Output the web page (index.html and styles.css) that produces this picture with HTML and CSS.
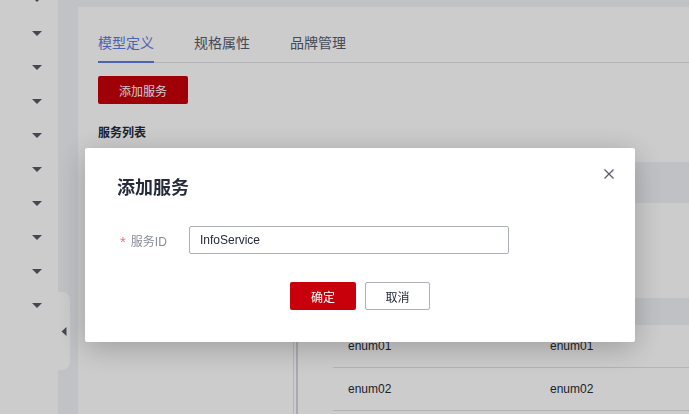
FILE: index.html
```html
<!DOCTYPE html>
<html lang="zh-CN">
<head>
    <meta charset="UTF-8">
    <meta name="viewport" content="width=device-width, initial-scale=1.0">
    <title>模型定义</title>
    <link rel="stylesheet" href="styles.css">
</head>
<body>
    <div class="sidebar">
        <ul class="menu">
            <li><svg class="caret" viewBox="0 0 10 5"><polygon points="0,0 10,0 5,5"/></svg></li>
            <li><svg class="caret" viewBox="0 0 10 5"><polygon points="0,0 10,0 5,5"/></svg></li>
            <li><svg class="caret" viewBox="0 0 10 5"><polygon points="0,0 10,0 5,5"/></svg></li>
            <li><svg class="caret" viewBox="0 0 10 5"><polygon points="0,0 10,0 5,5"/></svg></li>
            <li><svg class="caret" viewBox="0 0 10 5"><polygon points="0,0 10,0 5,5"/></svg></li>
            <li><svg class="caret" viewBox="0 0 10 5"><polygon points="0,0 10,0 5,5"/></svg></li>
            <li><svg class="caret" viewBox="0 0 10 5"><polygon points="0,0 10,0 5,5"/></svg></li>
            <li><svg class="caret" viewBox="0 0 10 5"><polygon points="0,0 10,0 5,5"/></svg></li>
            <li><svg class="caret" viewBox="0 0 10 5"><polygon points="0,0 10,0 5,5"/></svg></li>
            <li><svg class="caret" viewBox="0 0 10 5"><polygon points="0,0 10,0 5,5"/></svg></li>
        </ul>
        <div class="collapse-handle">
            <svg viewBox="0 0 5 9"><polygon points="5,0 5,9 0,4.5"/></svg>
        </div>
    </div>

    <div class="main">
        <div class="card">
            <div class="tabs">
                <div class="tab active">模型定义</div>
                <div class="tab">规格属性</div>
                <div class="tab">品牌管理</div>
            </div>
            <button class="btn-add">添加服务</button>
            <div class="section-title">服务列表</div>
            <div class="workspace">
                <div class="service-list"></div>
                <div class="splitter"></div>
                <div class="detail">
                    <div class="detail-header"></div>
                    <table class="enum-table">
                        <thead>
                            <tr><th class="col-1"></th><th></th></tr>
                        </thead>
                        <tbody>
                            <tr><td class="col-1">enum01</td><td>enum01</td></tr>
                            <tr><td class="col-1">enum02</td><td>enum02</td></tr>
                        </tbody>
                    </table>
                </div>
            </div>
        </div>
    </div>

    <div class="mask">
        <div class="modal">
            <button class="modal-close">
                <svg viewBox="0 0 10 10"><path d="M0.5 0.5 L9.5 9.5 M9.5 0.5 L0.5 9.5"/></svg>
            </button>
            <div class="modal-title">添加服务</div>
            <div class="form-row">
                <label class="form-label"><span class="required">*</span>服务ID</label>
                <input class="form-input" type="text" value="InfoService">
            </div>
            <div class="modal-footer">
                <button class="btn btn-ok">确定</button>
                <button class="btn btn-cancel">取消</button>
            </div>
        </div>
    </div>
</body>
</html>
```

FILE: styles.css
```css
body {
    margin: 0;
    padding: 0;
    display: flex;
    height: 100vh;
    overflow: hidden;
    font-family: "Liberation Sans", "Noto Sans CJK SC", sans-serif;
    font-size: 12px;
    color: #252b3a;
    background: #f1f3f8;
}

/* left nav (collapsed) */
.sidebar {
    width: 58px;
    flex: none;
    background: #fff;
    position: relative;
}
.menu {
    list-style: none;
    margin: -18px 0 0 0;
    padding: 0;
}
.menu li {
    height: 34px;
    display: flex;
    align-items: center;
    padding-left: 32px;
}
.caret {
    width: 10px;
    height: 5px;
    fill: #555a66;
}
.collapse-handle {
    position: absolute;
    left: 58px;
    top: 292px;
    width: 12px;
    height: 78px;
    background: #fff;
    border-radius: 0 8px 8px 0;
    display: flex;
    align-items: center;
    padding-left: 3px;
    box-sizing: border-box;
}
.collapse-handle svg {
    width: 6px;
    height: 9px;
    fill: #555a66;
}

/* content */
.main {
    flex: 1;
    padding: 7px 0 0 20px;
    min-width: 0;
}
.card {
    background: #fff;
    height: 100%;
    padding: 26px 0 0 20px;
    box-sizing: border-box;
    overflow: hidden;
}
.tabs {
    display: flex;
    gap: 40px;
    border-bottom: 1px solid #dfe1e6;
}
.tab {
    font-size: 14px;
    line-height: 20px;
    padding-bottom: 8px;
    border-bottom: 2px solid transparent;
    margin-bottom: -1px;
    color: #575d6c;
}
.tab.active {
    color: #5e7ce0;
    border-bottom-color: #5e7ce0;
}
.btn-add {
    display: block;
    margin-top: 13px;
    width: 90px;
    height: 28px;
    border: none;
    border-radius: 2px;
    background: #c7000b;
    color: #fff;
    font-family: inherit;
    font-size: 12px;
    padding: 0;
}
.section-title {
    margin-top: 20px;
    line-height: 18px;
    font-weight: bold;
}
.workspace {
    display: flex;
    margin-top: 8px;
    height: 300px;
}
.service-list {
    width: 195px;
    border-right: 1px solid #dfe1e6;
}
.splitter {
    width: 2px;
    margin-left: 2px;
    background: #d3d5dc;
}
.detail {
    flex: 1;
    padding-top: 12px;
}
.detail-header {
    height: 41px;
    background: #f0f2f7;
}
.enum-table {
    margin: 95px 0 0 35px;
    width: calc(100% - 35px);
    border-collapse: collapse;
}
.enum-table th {
    height: 27px;
    background: #f0f2f7;
    padding: 0;
}
.enum-table td {
    height: 42px;
    padding: 0 0 0 15px;
    border-bottom: 1px solid #dfe1e6;
    color: #252b3a;
}
.enum-table .col-1 {
    width: 187px;
}

/* dialog */
.mask {
    position: fixed;
    inset: 0;
    background: rgba(0, 0, 0, 0.2);
    padding: 148px 0 0 85px;
}
.modal {
    position: relative;
    width: 550px;
    box-sizing: border-box;
    background: #fff;
    border-radius: 2px;
    padding: 28px 32px 32px 32px;
    box-shadow: 0 6px 30px rgba(0, 0, 0, 0.24);
}
.modal-close {
    position: absolute;
    top: 21px;
    right: 21px;
    width: 10px;
    height: 10px;
    padding: 0;
    border: none;
    background: none;
    display: flex;
}
.modal-close svg {
    width: 10px;
    height: 10px;
    stroke: #575d6c;
    stroke-width: 1.3;
    fill: none;
}
.modal-title {
    font-size: 18px;
    line-height: 24px;
    font-weight: bold;
    color: #252b3a;
}
.form-row {
    display: flex;
    align-items: center;
    margin-top: 26px;
}
.form-label {
    width: 72px;
    padding-left: 3px;
    box-sizing: border-box;
    color: #8a8e99;
    font-size: 12px;
    display: flex;
    align-items: center;
}
.required {
    color: #f66f6a;
    font-size: 15px;
    line-height: 12px;
    padding-top: 4px;
    margin-right: 5px;
}
.form-input {
    width: 320px;
    height: 28px;
    box-sizing: border-box;
    border: 1px solid #adb0b8;
    border-radius: 2px;
    padding: 0 10px;
    font-family: inherit;
    font-size: 12px;
    color: #252b3a;
    outline: none;
}
.modal-footer {
    display: flex;
    justify-content: center;
    gap: 9px;
    margin-top: 28px;
}
.btn {
    height: 28px;
    width: 66px;
    border-radius: 2px;
    font-family: inherit;
    font-size: 12px;
    padding: 0;
}
.btn-ok {
    background: #c7000b;
    border: none;
    color: #fff;
}
.btn-cancel {
    width: 65px;
    background: #fff;
    border: 1px solid #adb0b8;
    color: #252b3a;
}
```
